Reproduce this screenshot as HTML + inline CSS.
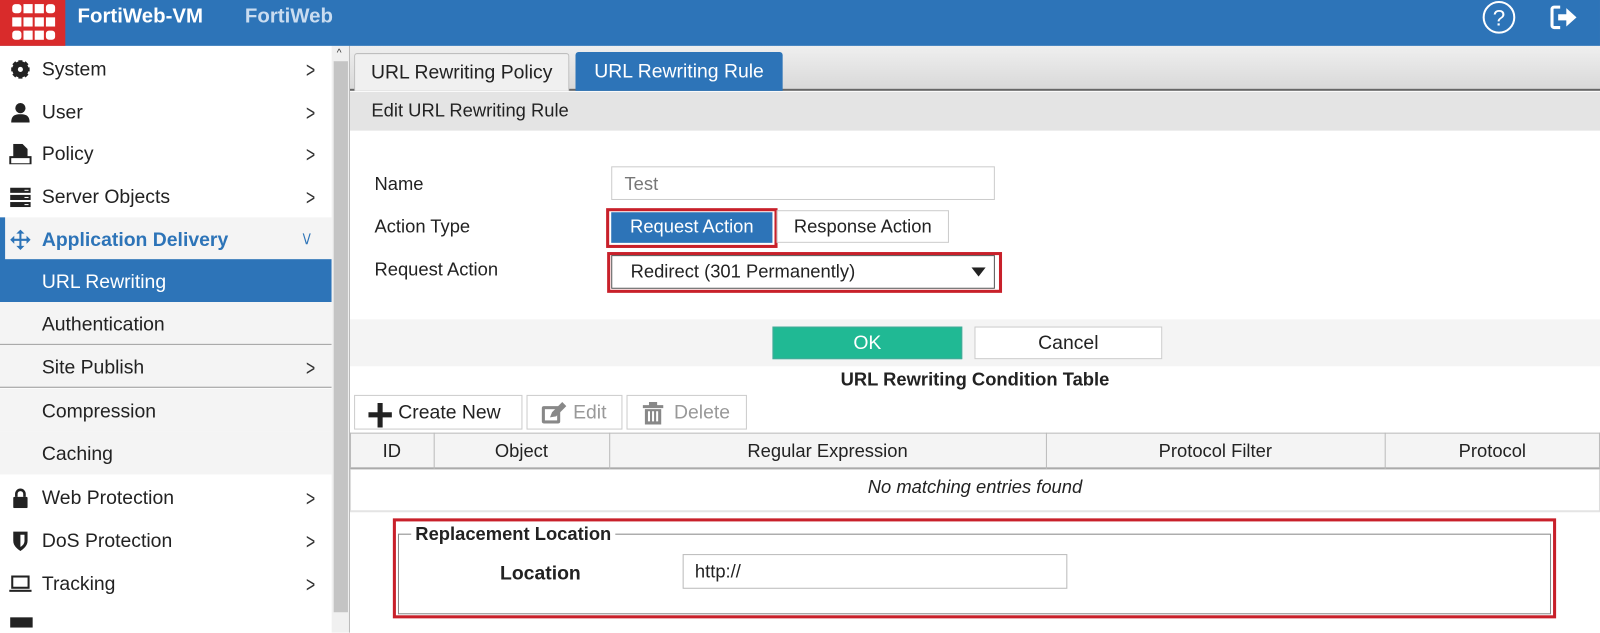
<!DOCTYPE html>
<html><head><meta charset="utf-8"><style>
*{box-sizing:border-box;margin:0;padding:0}
html,body{width:1600px;height:620px;overflow:hidden;background:#fff}
body{font-family:"Liberation Sans",sans-serif;color:#222;font-size:19px}
#w{position:absolute;left:0;top:0;width:1568px;height:608px;transform:scale(1.0204);transform-origin:0 0}
.a{position:absolute}
.hdr{left:0;top:0;width:1568px;height:45px;background:#2d74b8}
.logo{left:0;top:0;width:64px;height:45px;background:#d92b2b}
.side{left:0;top:45px;width:325px;height:575px;background:#fff}
.it{position:absolute;left:0;width:325px;height:42px;line-height:45px;padding-left:41px;font-size:19px;color:#222;white-space:nowrap}
.chev{position:absolute;right:14px;top:0;font-size:22px;color:#333;transform:scaleX(.7)}
.ic{position:absolute;left:9px;top:12px;width:22px;height:20px}
.lbl{position:absolute;font-size:18px;color:#222;white-space:nowrap}
.btn{position:absolute;border:1px solid #ccc;background:#fff;text-align:center;white-space:nowrap}
</style></head><body><div id="w">
<div class="a hdr"></div>
<div class="a logo"><svg width="64" height="45"><g fill="#fff"><rect x="12" y="4" width="9" height="9" rx="3"/><rect x="23" y="4" width="9" height="9"/><rect x="34" y="4" width="9" height="9"/><rect x="45" y="4" width="9" height="9" rx="3"/><rect x="12" y="17" width="9" height="9"/><rect x="23" y="17" width="9" height="9"/><rect x="34" y="17" width="9" height="9"/><rect x="45" y="17" width="9" height="9"/><rect x="12" y="30" width="9" height="9" rx="3"/><rect x="23" y="30" width="9" height="9"/><rect x="34" y="30" width="9" height="9"/><rect x="45" y="30" width="9" height="9" rx="3"/></g></svg></div>
<div class="a" style="left:76px;top:1px;color:#fff;font-weight:bold;font-size:20px;line-height:30px">FortiWeb-VM</div>
<div class="a" style="left:240px;top:1px;color:#c9dcf0;font-weight:bold;font-size:20px;line-height:30px">FortiWeb</div>
<svg class="a" style="left:1450px;top:0" width="40" height="36"><circle cx="19" cy="17" r="15" fill="none" stroke="#fff" stroke-width="2"/><text x="19" y="25" fill="#fff" font-size="22" text-anchor="middle" font-family="Liberation Sans">?</text></svg>
<svg class="a" style="left:1518px;top:4px" width="32" height="28"><path d="M11 3H5a2 2 0 0 0-2 2v16a2 2 0 0 0 2 2h6" fill="none" stroke="#fff" stroke-width="3"/><path d="M9 10h8V4l10 9-10 9v-6H9z" fill="#fff"/></svg>

<div class="a side">
 <div class="it" style="top:1px"><svg class="ic" viewBox="0 0 22 20"><circle cx="11" cy="10" r="6" fill="none" stroke="#222" stroke-width="4"/><g stroke="#222" stroke-width="4"><path d="M11 1v18M2 10h18M4.5 3.5l13 13M17.5 3.5l-13 13"/></g><circle cx="11" cy="10" r="2.5" fill="#fff"/></svg>System<span class="chev">&gt;</span></div>
 <div class="it" style="top:43px"><svg class="ic" viewBox="0 0 22 20"><circle cx="11" cy="6" r="5" fill="#222"/><path d="M2 20c0-7 4-8 9-8s9 1 9 8z" fill="#222"/></svg>User<span class="chev">&gt;</span></div>
 <div class="it" style="top:84px"><svg class="ic" viewBox="0 0 22 20"><path d="M4 0h9l5 5v8H4z" fill="#222"/><path d="M1 13h20v7H1z" fill="none" stroke="#222" stroke-width="2"/></svg>Policy<span class="chev">&gt;</span></div>
 <div class="it" style="top:126px"><svg class="ic" viewBox="0 0 22 20"><g fill="#222"><rect x="1" y="1" width="20" height="5"/><rect x="1" y="8" width="20" height="5"/><rect x="1" y="15" width="20" height="5"/></g><g fill="#fff"><rect x="15" y="3" width="4" height="1"/><rect x="15" y="10" width="4" height="1"/><rect x="15" y="17" width="4" height="1"/></g></svg>Server Objects<span class="chev">&gt;</span></div>
 <div class="it" style="top:168px;background:#f4f4f4;color:#2d74b8;font-weight:bold;border-left:5px solid #2d74b8;padding-left:36px"><svg class="ic" style="left:4px" viewBox="0 0 22 20"><path d="M11 0l4 4h-3v5h5V6l4 4-4 4v-3h-5v5h3l-4 4-4-4h3v-5H5v3l-4-4 4-4v3h5V4H7z" fill="#2d74b8"/></svg>Application Delivery<span class="chev" style="transform:rotate(90deg) scaleY(.7);right:18px;color:#2d74b8;font-weight:normal;line-height:42px">&gt;</span></div>
 <div class="it" style="top:209px;background:#2d74b8;color:#fff">URL Rewriting</div>
 <div class="it" style="top:251px;background:#f4f4f4;border-bottom:1px solid #999">Authentication</div>
 <div class="it" style="top:293px;background:#f4f4f4;border-bottom:1px solid #999">Site Publish<span class="chev">&gt;</span></div>
 <div class="it" style="top:336px;background:#f4f4f4">Compression</div>
 <div class="it" style="top:378px;background:#f4f4f4">Caching</div>
 <div class="it" style="top:421px"><svg class="ic" viewBox="0 0 22 20"><path d="M7 9V6a4 4 0 0 1 8 0v3" fill="none" stroke="#222" stroke-width="2.5"/><rect x="4" y="9" width="14" height="11" rx="1" fill="#222"/></svg>Web Protection<span class="chev">&gt;</span></div>
 <div class="it" style="top:463px"><svg class="ic" viewBox="0 0 22 20"><path d="M4 1h14v9c0 5-4 8-7 10-3-2-7-5-7-10z" fill="#222"/><path d="M11 4h4v6c0 3-2 5-4 6z" fill="#fff"/></svg>DoS Protection<span class="chev">&gt;</span></div>
 <div class="it" style="top:505px"><svg class="ic" viewBox="0 0 22 20"><rect x="3" y="3" width="16" height="11" fill="none" stroke="#222" stroke-width="2"/><rect x="0" y="16" width="22" height="2" fill="#222"/></svg>Tracking<span class="chev">&gt;</span></div>
 <div class="a" style="left:10px;top:560px;width:22px;height:10px;background:#222"></div>
</div>
<div class="a" style="left:325px;top:45px;width:17px;height:575px;background:#f0f0f0"></div>
<div class="a" style="left:327px;top:60px;width:14px;height:540px;background:#c4c4c4"></div>
<div class="a" style="left:330px;top:47px;font-size:10px;color:#333">^</div>
<div class="a" style="left:342px;top:45px;width:1px;height:575px;background:#bbb"></div>

<div class="a" style="left:343px;top:45px;width:1257px;height:44px;background:linear-gradient(#efefef,#d9d9d9);border-bottom:2px solid #666"></div>
<div class="a" style="left:347px;top:52px;width:211px;height:37px;background:#f0f0f0;border:1px solid #bbb;border-bottom:none;border-radius:3px 3px 0 0;line-height:38px;text-align:center;font-size:19px;white-space:nowrap">URL Rewriting Policy</div>
<div class="a" style="left:564px;top:51px;width:203px;height:38px;background:#2d74b8;color:#fff;border-radius:3px 3px 0 0;line-height:40px;text-align:center;font-size:19px;white-space:nowrap">URL Rewriting Rule</div>
<div class="a" style="left:343px;top:90px;width:1257px;height:38px;background:#e4e4e4;padding-left:21px;line-height:36px;font-size:18px">Edit URL Rewriting Rule</div>

<div class="lbl" style="left:367px;top:170px">Name</div>
<div class="lbl" style="left:367px;top:212px">Action Type</div>
<div class="lbl" style="left:367px;top:254px">Request Action</div>
<div class="a" style="left:599px;top:163px;width:376px;height:33px;border:1px solid #ccc;padding-left:12px;line-height:32px;color:#777;font-size:18px">Test</div>
<div class="a" style="left:594px;top:204px;width:168px;height:39px;border:3px solid #c8202a"></div>
<div class="a" style="left:599px;top:208px;width:158px;height:30px;background:#2d74b8;color:#fff;text-align:center;line-height:29px;font-size:18px;white-space:nowrap">Request Action</div>
<div class="a" style="left:761px;top:206px;width:169px;height:32px;border:1px solid #ccc;text-align:center;line-height:30px;font-size:18px;white-space:nowrap">Response Action</div>
<div class="a" style="left:595px;top:247px;width:387px;height:40px;border:3px solid #c8202a"></div>
<div class="a" style="left:599px;top:250px;width:376px;height:33px;border:1px solid #555;padding-left:18px;line-height:31px;font-size:18px">Redirect (301 Permanently)<svg style="position:absolute;right:8px;top:11px" width="14" height="9"><path d="M0 0h14L7 9z" fill="#222"/></svg></div>

<div class="a" style="left:343px;top:313px;width:1257px;height:46px;background:#f4f4f4"></div>
<div class="a" style="left:757px;top:320px;width:186px;height:32px;background:#20b994;border:1px solid #4a9;color:#fff;text-align:center;line-height:32px;font-size:19px">OK</div>
<div class="btn" style="left:955px;top:320px;width:184px;height:32px;line-height:32px;font-size:19px">Cancel</div>
<div class="a" style="left:343px;top:362px;width:1225px;text-align:center;font-weight:bold;font-size:18px">URL Rewriting Condition Table</div>

<div class="btn" style="left:347px;top:387px;width:165px;height:34px;line-height:34px;font-size:19px;padding-left:22px">Create New<svg style="position:absolute;left:13px;top:7px" width="24" height="24"><path d="M9 0h5v9h9v5h-9v10H9V14H0V9h9z" fill="#222"/></svg></div>
<div class="btn" style="left:516px;top:387px;width:94px;height:34px;line-height:34px;font-size:19px;color:#999;padding-left:30px">Edit<svg style="position:absolute;left:13px;top:6px" width="26" height="22"><rect x="1" y="4" width="18" height="17" fill="#888" rx="2"/><rect x="4" y="7" width="12" height="11" fill="#fff"/><path d="M9 15l2-5 10-10 4 4-10 10z" fill="#888"/></svg></div>
<div class="btn" style="left:614px;top:387px;width:118px;height:34px;line-height:34px;font-size:19px;color:#999;padding-left:30px">Delete<svg style="position:absolute;left:14px;top:6px" width="22" height="22"><path d="M1 3h20v3H1zM7 0h8v3H7zM3 7h16v15H3z" fill="#888"/><path d="M7 9v10M11 9v10M15 9v10" stroke="#fff" stroke-width="2"/></svg></div>

<div class="a" style="left:343px;top:424px;width:1225px;height:36px;background:#f4f4f4;border:1px solid #bbb;border-bottom:2px solid #aaa"></div>
<div class="a" style="left:425px;top:424px;width:1px;height:36px;background:#bbb"></div>
<div class="a" style="left:597px;top:424px;width:1px;height:36px;background:#bbb"></div>
<div class="a" style="left:1025px;top:424px;width:1px;height:36px;background:#bbb"></div>
<div class="a" style="left:1357px;top:424px;width:1px;height:36px;background:#bbb"></div>
<div class="lbl" style="left:343px;top:432px;width:82px;text-align:center">ID</div>
<div class="lbl" style="left:425px;top:432px;width:172px;text-align:center">Object</div>
<div class="lbl" style="left:597px;top:432px;width:428px;text-align:center">Regular Expression</div>
<div class="lbl" style="left:1025px;top:432px;width:332px;text-align:center">Protocol Filter</div>
<div class="lbl" style="left:1357px;top:432px;width:211px;text-align:center">Protocol</div>
<div class="a" style="left:343px;top:460px;width:1225px;height:42px;border:1px solid #ddd;border-top:none;border-bottom:2px solid #e4e4e4"></div>
<div class="lbl" style="left:343px;top:467px;width:1225px;text-align:center;font-style:italic">No matching entries found</div>

<div class="a" style="left:385px;top:508px;width:1140px;height:98px;border:3px solid #c8202a"></div>
<div class="a" style="left:390px;top:523px;width:1130px;height:79px;border:1px solid #888"></div>
<div class="a" style="left:403px;top:513px;background:#fff;padding:0 4px;font-weight:bold;font-size:18px;white-space:nowrap">Replacement Location</div>
<div class="a" style="left:490px;top:552px;font-weight:bold;font-size:19px">Location</div>
<div class="a" style="left:669px;top:543px;width:377px;height:34px;border:1px solid #bbb;padding-left:11px;line-height:33px;font-size:18px">http://</div>
</div></body></html>
